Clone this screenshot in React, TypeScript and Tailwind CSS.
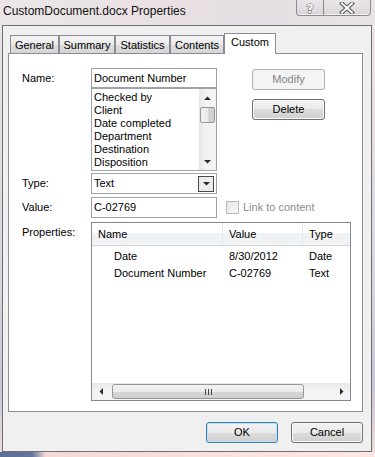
import React from "react";

const btnBg =
  "bg-[linear-gradient(to_bottom,#f2f2f2_0%,#ebebeb_50%,#dddddd_50%,#cfcfcf_100%)]";

function Btn({
  label,
  kind,
  w,
}: {
  label: string;
  kind: "normal" | "disabled" | "focused";
  w: string;
}) {
  if (kind === "disabled")
    return (
      <div
        className={`${w} h-[21px] rounded-[3px] border border-[#adb2b5] bg-[#f4f4f4] text-[#838383] flex items-center justify-center text-[11px]`}
      >
        {label}
      </div>
    );
  if (kind === "focused")
    return (
      <div
        className={`${w} h-[21px] rounded-[3px] border border-[#3c7fb1] shadow-[inset_0_0_0_1px_#b9e3f8] bg-[linear-gradient(to_bottom,#f2f2f2_0%,#ebebeb_50%,#dddddd_50%,#cfcfcf_100%)] flex items-center justify-center text-[11px] text-black`}
      >
        {label}
      </div>
    );
  return (
    <div
      className={`${w} h-[21px] rounded-[3px] border border-[#707070] shadow-[inset_0_0_0_1px_#fafafa] ${btnBg} flex items-center justify-center text-[11px] text-black`}
    >
      {label}
    </div>
  );
}

function Arrow({ dir }: { dir: "up" | "down" | "left" | "right" }) {
  const d =
    dir === "up"
      ? "M3.5 0.5L7 4H0z"
      : dir === "down"
      ? "M0 0H7L3.5 3.5z"
      : dir === "left"
      ? "M0.5 3.5L4 0V7z"
      : "M0 0L3.5 3.5L0 7z";
  const w = dir === "up" || dir === "down" ? 7 : 4;
  const h = dir === "up" || dir === "down" ? 4 : 7;
  return (
    <svg width={w} height={h} viewBox={`0 0 ${w} ${h}`}>
      <path d={d} fill="#2b2b2b" />
    </svg>
  );
}

function Tab({ label, w, selected }: { label: string; w: string; selected?: boolean }) {
  if (selected)
    return (
      <div
        className={`${w} h-[21px] border border-[#898c95] border-b-0 bg-white flex justify-center pt-[2px] text-[11px] leading-[13px] text-black`}
      >
        {label}
      </div>
    );
  return (
    <div
      className={`${w} h-[18px] mb-[1px] border border-[#898c95] border-b-0 bg-[linear-gradient(to_bottom,#f3f3f3_0%,#ebebeb_50%,#dddddd_51%,#d6d6d6_100%)] flex justify-center pt-[3px] text-[11px] leading-[13px] text-black`}
    >
      {label}
    </div>
  );
}

export default function App() {
  return (
    <div className="w-[375px] h-[457px] overflow-hidden flex flex-col font-['Liberation_Sans',Arial,sans-serif] bg-[linear-gradient(180deg,#ece5e8_0%,#e5dfe3_25%,#d9d5de_60%,#c9c4d6_85%,#f1dcdc_100%)] text-black">
      {/* Title bar */}
      <div className="h-[25px] flex justify-between items-start bg-[linear-gradient(90deg,#ede6e8_0%,#e9e1e4_40%,#e4dde1_70%,#ebe4e6_100%)]">
        <div className="pl-[3px] pt-[3px] text-[12px] leading-[16px] text-[#111]">
          CustomDocument.docx Properties
        </div>
        <div className="flex mr-[4px] h-[16px] border border-t-0 border-[#8b8b8b] rounded-b-[4px] bg-[linear-gradient(to_bottom,#e9e5e9_0%,#e2dde2_60%,#d8d3d9_100%)] shadow-[inset_0_-1px_0_#f4f2f4]">
          <div className="w-[27px] flex items-center justify-center border-r border-[#8b8b8b]">
            <svg width="12" height="14" viewBox="0 0 12 14">
              <text
                x="6"
                y="12"
                textAnchor="middle"
                fontFamily="DejaVu Sans, sans-serif"
                fontWeight="bold"
                fontSize="13"
                fill="#ffffff"
                stroke="#555"
                strokeWidth="1"
                paintOrder="stroke"
              >
                ?
              </text>
            </svg>
          </div>
          <div className="w-[46px] flex items-center justify-center">
            <svg width="16" height="12" viewBox="0 0 16 12">
              <path
                d="M3 1.5L13 10.5M13 1.5L3 10.5"
                stroke="#555"
                strokeWidth="4"
                strokeLinecap="square"
              />
              <path
                d="M3 1.5L13 10.5M13 1.5L3 10.5"
                stroke="#ffffff"
                strokeWidth="2"
                strokeLinecap="square"
              />
            </svg>
          </div>
        </div>
      </div>

      {/* Client area */}
      <div className="ml-[2px] w-[370px] h-[427px] border border-[#6f6f6f] bg-[#f0f0f0] pl-[5px] pt-[7px] flex flex-col">
        {/* Tabs */}
        <div className="flex items-end h-[21px] pl-[2px] -mb-[1px] relative z-10">
          <Tab label="General" w="w-[49px]" />
          <Tab label="Summary" w="w-[56px]" />
          <Tab label="Statistics" w="w-[55px]" />
          <Tab label="Contents" w="w-[54px]" />
          <Tab label="Custom" w="w-[52px]" selected />
        </div>

        {/* Panel */}
        <div className="w-[355px] h-[359px] border border-[#898c95] bg-white pl-[13px] pt-[14px] flex flex-col text-[11px] leading-[13px]">
          {/* Name row */}
          <div className="flex items-start">
            <div className="w-[69px] pt-[4px]">Name:</div>
            <div className="w-[126px] flex flex-col">
              <div className="h-[20px] border border-[#9fa2a8] flex items-center pl-[2px]">
                Document Number
              </div>
              <div className="h-[83px] border border-[#9fa2a8] flex">
                <div className="flex-1 pl-[2px] pt-[2px] flex flex-col">
                  <div className="h-[13px]">Checked by</div>
                  <div className="h-[13px]">Client</div>
                  <div className="h-[13px]">Date completed</div>
                  <div className="h-[13px]">Department</div>
                  <div className="h-[13px]">Destination</div>
                  <div className="h-[13px]">Disposition</div>
                </div>
                <div className="w-[17px] flex flex-col bg-[linear-gradient(90deg,#e6e6e6_0%,#f3f3f3_40%,#f3f3f3_100%)]">
                  <div className="h-[17px] flex items-center justify-center">
                    <Arrow dir="up" />
                  </div>
                  <div className="mt-[1px] mx-[1px] h-[16px] rounded-[2px] border border-[#979797] bg-[linear-gradient(90deg,#f2f2f2_0%,#ebebeb_50%,#d6d6d6_51%,#d0d0d0_100%)]" />
                  <div className="flex-1" />
                  <div className="h-[17px] flex items-center justify-center">
                    <Arrow dir="down" />
                  </div>
                </div>
              </div>
            </div>
            <div className="ml-[35px] mt-[1px] flex flex-col">
              <Btn label="Modify" kind="disabled" w="w-[73px]" />
              <div className="mt-[9px]">
                <Btn label="Delete" kind="normal" w="w-[73px]" />
              </div>
            </div>
          </div>

          {/* Type row */}
          <div className="flex items-start mt-[2px]">
            <div className="w-[69px] pt-[4px]">Type:</div>
            <div className="w-[126px] h-[21px] border border-[#9fa2a8] flex items-center pl-[2px] pr-[2px]">
              <div className="flex-1">Text</div>
              <div className="w-[16px] h-[16px] border border-[#4a4a4a] bg-[#ececec] flex items-center justify-center">
                <Arrow dir="down" />
              </div>
            </div>
          </div>

          {/* Value row */}
          <div className="flex items-center mt-[3px]">
            <div className="w-[69px]">Value:</div>
            <div className="w-[126px] h-[21px] border border-[#9fa2a8] flex items-center pl-[2px]">
              C-02769
            </div>
            <div className="ml-[9px] w-[13px] h-[13px] border border-[#b9b9b9] bg-[linear-gradient(135deg,#e6e6e6_0%,#f8f8f8_100%)]" />
            <div className="ml-[4px] text-[#8d8d8d]">Link to content</div>
          </div>

          {/* Properties row */}
          <div className="flex items-start mt-[4px]">
            <div className="w-[69px] pt-[4px]">Properties:</div>
            <div className="w-[260px] h-[179px] border border-[#828790] flex flex-col">
              <div className="h-[23px] flex border-b border-[#d5d5d5] bg-[linear-gradient(to_bottom,#ffffff_0%,#ffffff_45%,#f1f2f4_46%,#f1f2f4_100%)]">
                <div className="w-[131px] pl-[6px] flex items-center border-r border-[#e3e8ee]">
                  Name
                </div>
                <div className="w-[80px] pl-[6px] flex items-center border-r border-[#e3e8ee]">
                  Value
                </div>
                <div className="flex-1 pl-[6px] flex items-center">Type</div>
              </div>
              <div className="mt-[2px] h-[17px] flex items-center">
                <div className="w-[131px] pl-[22px]">Date</div>
                <div className="w-[80px] pl-[6px]">8/30/2012</div>
                <div className="flex-1 pl-[6px]">Date</div>
              </div>
              <div className="h-[17px] flex items-center">
                <div className="w-[131px] pl-[22px]">Document Number</div>
                <div className="w-[80px] pl-[6px]">C-02769</div>
                <div className="flex-1 pl-[6px]">Text</div>
              </div>
              <div className="flex-1" />
              <div className="h-[17px] flex items-center bg-[linear-gradient(to_bottom,#e8e8e8_0%,#f4f4f4_50%,#f4f4f4_100%)]">
                <div className="w-[17px] h-full flex items-center justify-center">
                  <Arrow dir="left" />
                </div>
                <div className="ml-[3px] w-[192px] h-[15px] rounded-[3px] border border-[#979797] bg-[linear-gradient(to_bottom,#f2f2f2_0%,#ebebeb_50%,#d6d6d6_51%,#cfcfcf_100%)] flex items-center justify-center">
                  <div className="flex gap-[2px]">
                    <div className="w-[1px] h-[6px] bg-[#444]" />
                    <div className="w-[1px] h-[6px] bg-[#444]" />
                    <div className="w-[1px] h-[6px] bg-[#444]" />
                  </div>
                </div>
                <div className="flex-1" />
                <div className="w-[17px] h-full flex items-center justify-center">
                  <Arrow dir="right" />
                </div>
              </div>
            </div>
          </div>
        </div>

        {/* Bottom buttons */}
        <div className="w-[355px] mt-[10px] flex justify-end gap-[13px]">
          <Btn label="OK" kind="focused" w="w-[72px]" />
          <Btn label="Cancel" kind="normal" w="w-[72px]" />
        </div>
      </div>

      {/* Bottom glass strip */}
      <div className="flex-1 bg-[linear-gradient(90deg,#5d6e97_0%,#64749b_32px,#f4dad7_46px,#fde6e2_100%)]" />
    </div>
  );
}
